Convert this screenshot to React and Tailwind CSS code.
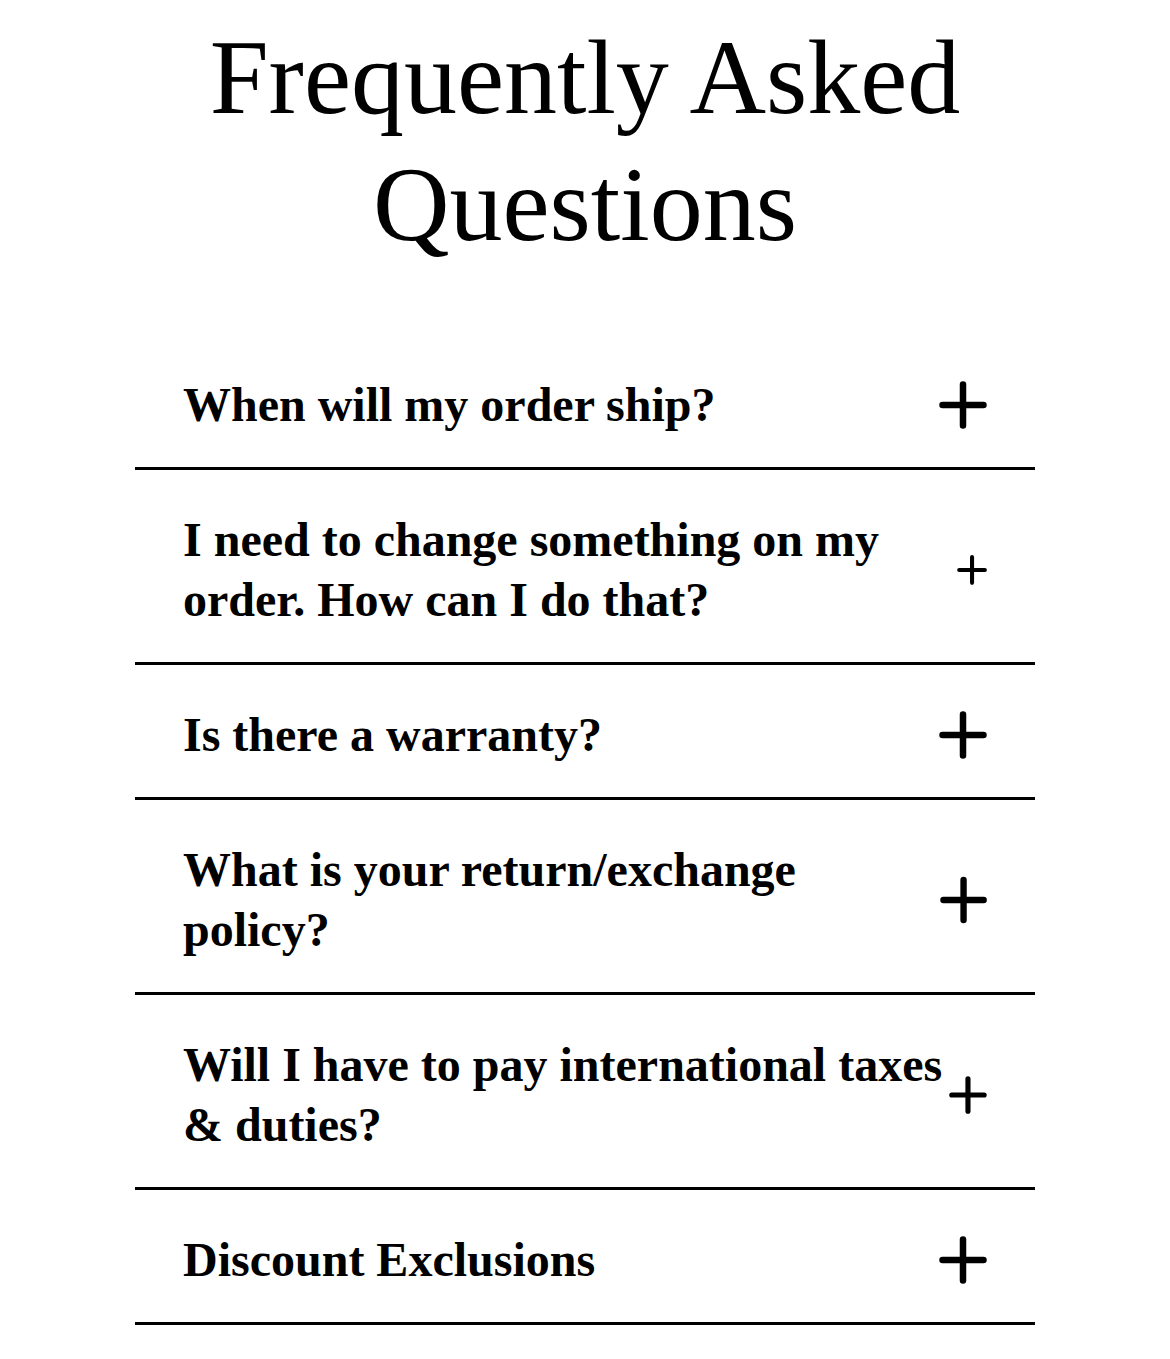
const faqs = [
  "When will my order ship?",
  "I need to change something on my order. How can I do that?",
  "Is there a warranty?",
  "What is your return/exchange policy?",
  "Will I have to pay international taxes & duties?",
  "Discount Exclusions",
];

function PlusIcon() {
  return (
    <svg
      width="48"
      height="48"
      viewBox="0 0 48 48"
      className="min-w-0 shrink"
      fill="none"
      stroke="currentColor"
      strokeWidth="6.5"
      strokeLinecap="round"
    >
      <path d="M24 3.5v41M3.5 24h41" />
    </svg>
  );
}

function FaqItem({ question }) {
  return (
    <div className="border-b-[3px] border-black">
      <button className="flex w-full items-center justify-between px-12 pb-8 pt-10 text-left text-black">
        <span className="text-[48px] font-bold leading-[60px]">{question}</span>
        <PlusIcon />
      </button>
    </div>
  );
}

export default function App() {
  return (
    <div className="min-h-screen bg-white text-black" style={{ fontFamily: '"Liberation Serif", "Times New Roman", serif' }}>
      <div className="mx-auto w-[900px] pt-[14px]">
        <h1 className="text-center text-[106px] font-normal leading-[1.2]">
          Frequently Asked
          <br />
          Questions
        </h1>
        <div className="mt-[67px]">
          {faqs.map((q) => (
            <FaqItem key={q} question={q} />
          ))}
        </div>
      </div>
    </div>
  );
}
